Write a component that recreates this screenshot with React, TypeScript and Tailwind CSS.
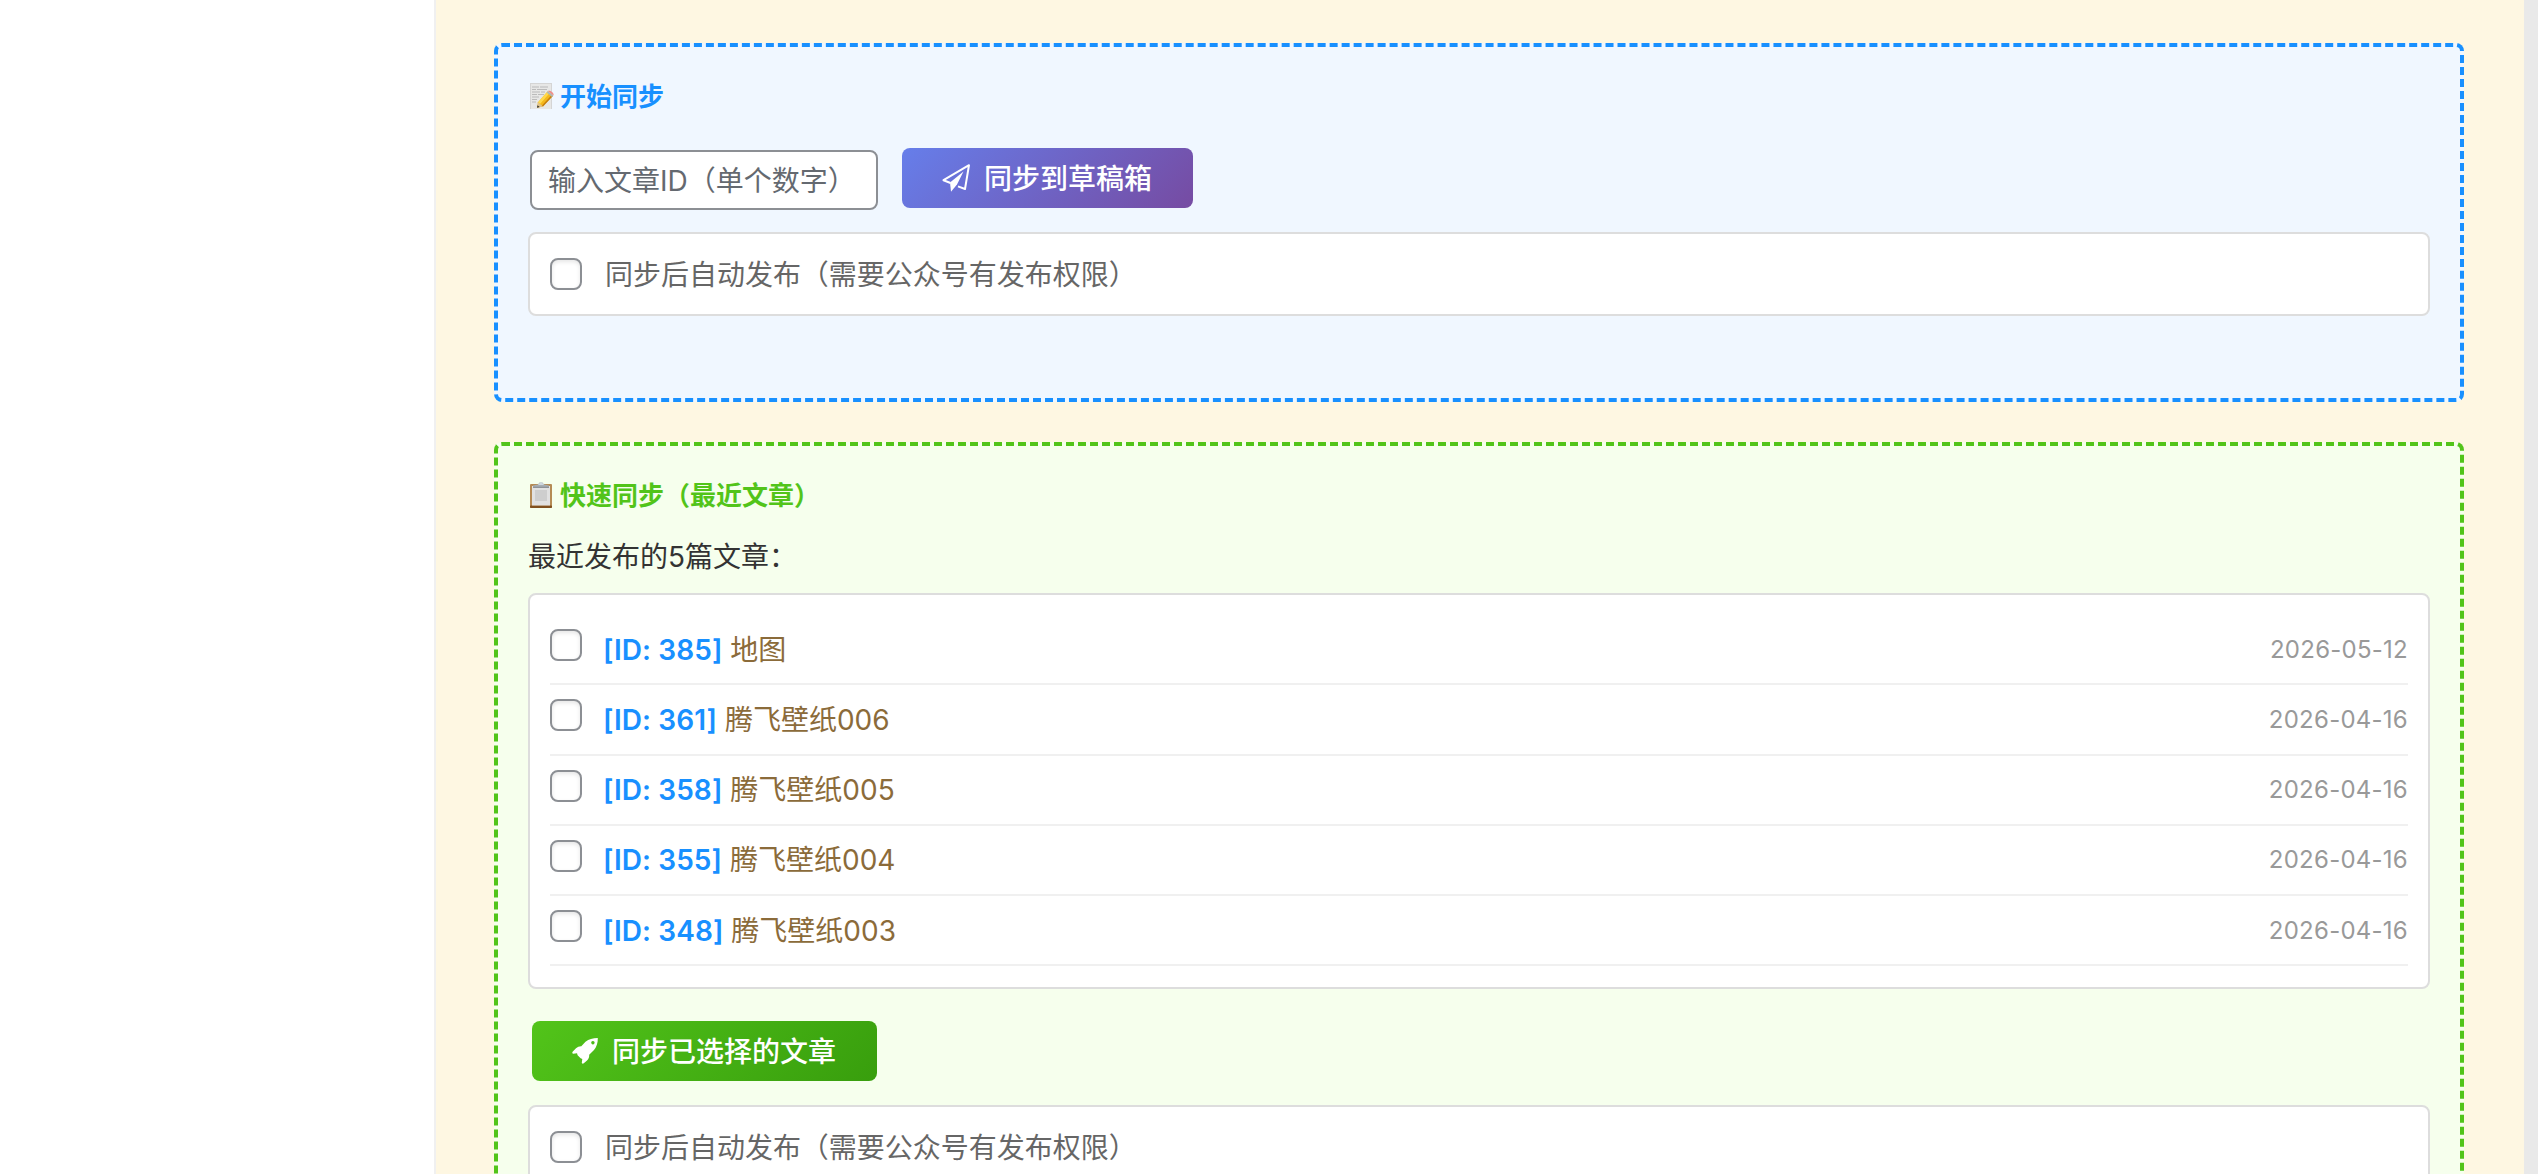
const articles = [
  { id: 385, title: "地图", date: "2026-05-12" },
  { id: 361, title: "腾飞壁纸006", date: "2026-04-16" },
  { id: 358, title: "腾飞壁纸005", date: "2026-04-16" },
  { id: 355, title: "腾飞壁纸004", date: "2026-04-16" },
  { id: 348, title: "腾飞壁纸003", date: "2026-04-16" },
];

function Check() {
  return (
    <input
      type="checkbox"
      className="block h-8 w-8 shrink-0 appearance-none rounded-lg border-2 border-[#8c8f94] bg-white shadow-[inset_0_2px_4px_rgba(0,0,0,0.1)]"
    />
  );
}

function MemoIcon() {
  return (
    <svg className="block h-[26px] w-6 shrink-0" viewBox="0 0 24 26">
      <rect width="22" height="26" fill="#e7e7e6" />
      <path d="M0 .5h22M.5 0v26M21.5 0v26" stroke="#d5d5d5" />
      <path
        d="M2 4h7m1 0h8M2 6.5h4m1 0h10M2 9h8m1 0h4M2 11.500h5m1 0h6M2 14h7M2 16.500h5M2 19h4"
        stroke="#a8a8a8"
        strokeWidth=".7"
      />
      <path d="M7 24.800l1-5.500L17.500 8.500l5.300 4.500L13 23.500z" fill="#f4b81c" />
      <path d="M8 19.300L17.500 8.500l2 1.700L10 21z" fill="#ffd84c" />
      <path d="M11.800 22.800l9.800-10.800 1.200 1-9.800 10.500z" fill="#c47d12" />
      <path d="M7 24.800l1-5.500 5 4.200z" fill="#dfc28b" />
      <path d="M7 24.800l.5-2.500 2.200 1.800z" fill="#333" />
      <path d="M16.700 9.500l1.300-1.500 5.300 4.500-1.300 1.500z" fill="#aeb8b5" />
      <path d="M18 8c1.700-1.500 7 2.200 5.300 4.500z" fill="#ef8d89" />
    </svg>
  );
}

function ClipboardIcon() {
  return (
    <svg className="block h-[26px] w-6 shrink-0" viewBox="0 0 24 26">
      <rect y="2" width="22" height="24" rx="1" fill="#b58b55" />
      <rect y="23.500" width="22" height="2.500" rx="1" fill="#80501f" />
      <rect x="2" y="4" width="18" height="19.500" fill="#e1e1e1" />
      <rect x="5" y="8" width="12" height="11" fill="#cecece" />
      <path d="M3 5.500V3.500l5-1 1.500-2h3l1.500 2 5 1v2z" fill="#a7adb3" />
      <path d="M8 3l2-2.500h2L14 3z" fill="#cfd8df" />
      <path d="M3 5.300h16" stroke="#82858a" />
    </svg>
  );
}

function PaperPlaneIcon() {
  return (
    <svg className="block h-7 w-7" viewBox="0 0 28 28">
      <path
        d="M8.500 19L1.500 16.200 27 1.200 23 25l-7-2.600"
        fill="none"
        stroke="white"
        strokeWidth="2"
        strokeLinejoin="round"
      />
      <path d="M8 18.500L21.500 7.500 15 20.500 9 27.800z" fill="white" />
    </svg>
  );
}

function RocketIcon() {
  return (
    <svg className="block h-[26px] w-[26px]" viewBox="0 0 26 26">
      <path
        fill="white"
        fillRule="evenodd"
        d="M25.800 0C20.500 0 17 1.200 13.500 3.700L9.300 8.200C7.500 8.100 5.500 8.800 4 10.300L.6 13.800C0 14.700.3 15.800 1.300 15.700L5 15.300 5.600 17.200 8.600 20.200 10.300 20.900 9.800 24.600C9.700 25.800 11 26 11.800 25.300L15 22.500C16.800 20.700 17.400 18.800 17.200 16.700L22 12C24.700 8.600 25.900 5 25.800 0ZM20.900 3a1.700 1.700 0 1 0 .01 0Z"
      />
    </svg>
  );
}

function AutoPublish() {
  return (
    <label className="flex h-[84px] items-center rounded-lg border-2 border-[#ddd] bg-white px-5">
      <Check />
      <span className="mt-px ml-[23px] text-[28px] leading-8 tracking-[-0.02px] text-[#666]">
        同步后自动发布（需要公众号有发布权限）
      </span>
    </label>
  );
}

export default function App() {
  return (
    <div className="flex h-[1174px] w-[2538px] overflow-hidden bg-white font-['Inter','Noto_Sans_CJK_SC',sans-serif]">
      <aside className="w-[434px] shrink-0" />
      <main className="w-[2090px] shrink-0 border-l-2 border-[#f0f0f0] bg-[#fef7e2] pt-[43px] pr-[60px] pl-[58px]">
        <section className="h-[359px] rounded-lg border-4 border-dashed border-[#1890ff] bg-[#f0f7ff] px-[30px] pt-9">
          <h3 className="ml-0.5 flex h-[26px] items-center text-[26px] leading-[26px] font-bold text-[#1890ff]">
            <MemoIcon />
            <span className="mt-0.5 ml-1.5">开始同步</span>
          </h3>
          <div className="mt-[39px] ml-0.5 flex items-start">
            <input
              className="mt-0.5 h-[60px] w-[348px] rounded-lg border-2 border-[#8c8f94] bg-white px-4 pt-0.5 text-[28px] placeholder:text-[#646970]"
              placeholder="输入文章ID（单个数字）"
            />
            <button className="ml-6 flex h-[60px] w-[291px] items-center rounded-lg bg-[linear-gradient(135deg,#667eea_0%,#764ba2_100%)] pl-10 text-[28px] leading-8 font-medium text-white">
              <PaperPlaneIcon />
              <span className="mt-0.5 ml-3.5">同步到草稿箱</span>
            </button>
          </div>
          <div className="mt-[22px]">
            <AutoPublish />
          </div>
        </section>

        <section className="mt-10 h-[900px] rounded-lg border-4 border-dashed border-[#52c41a] bg-[#f6ffed] px-[30px] pt-9">
          <h3 className="ml-0.5 flex h-[26px] items-center text-[26px] leading-[26px] font-bold text-[#52c41a]">
            <ClipboardIcon />
            <span className="mt-0.5 ml-1.5">快速同步（最近文章）</span>
          </h3>
          <p className="mt-[33px] h-8 text-[28px] leading-8 text-[#333]">最近发布的5篇文章：</p>
          <ul className="mt-5 h-[396px] rounded-lg border-2 border-[#ddd] bg-white p-5">
            {articles.map((a) => (
              <li key={a.id} className="flex h-[70.3px] border-b-2 border-[#f0f0f0] pt-3.5">
                <Check />
                <span className="mt-[4.5px] ml-[21px] text-[28px] leading-8 text-[#8b6b3a]">
                  <strong className="font-semibold tracking-[0.1px] text-[#1890ff]">[ID: {a.id}]</strong> {a.title}
                </span>
                <time className="mt-[4.5px] ml-auto text-2xl leading-8 tracking-[0.25px] text-[#999]">{a.date}</time>
              </li>
            ))}
          </ul>
          <button className="mt-8 ml-1 flex h-[60px] w-[345px] items-center rounded-lg bg-[linear-gradient(135deg,#52c41a_0%,#389e0d_100%)] pl-10 text-[28px] leading-8 font-medium text-white">
            <RocketIcon />
            <span className="mt-0.5 ml-3.5">同步已选择的文章</span>
          </button>
          <div className="mt-6">
            <AutoPublish />
          </div>
        </section>
      </main>
      <div className="grow bg-[#e9e9e9]" />
    </div>
  );
}
